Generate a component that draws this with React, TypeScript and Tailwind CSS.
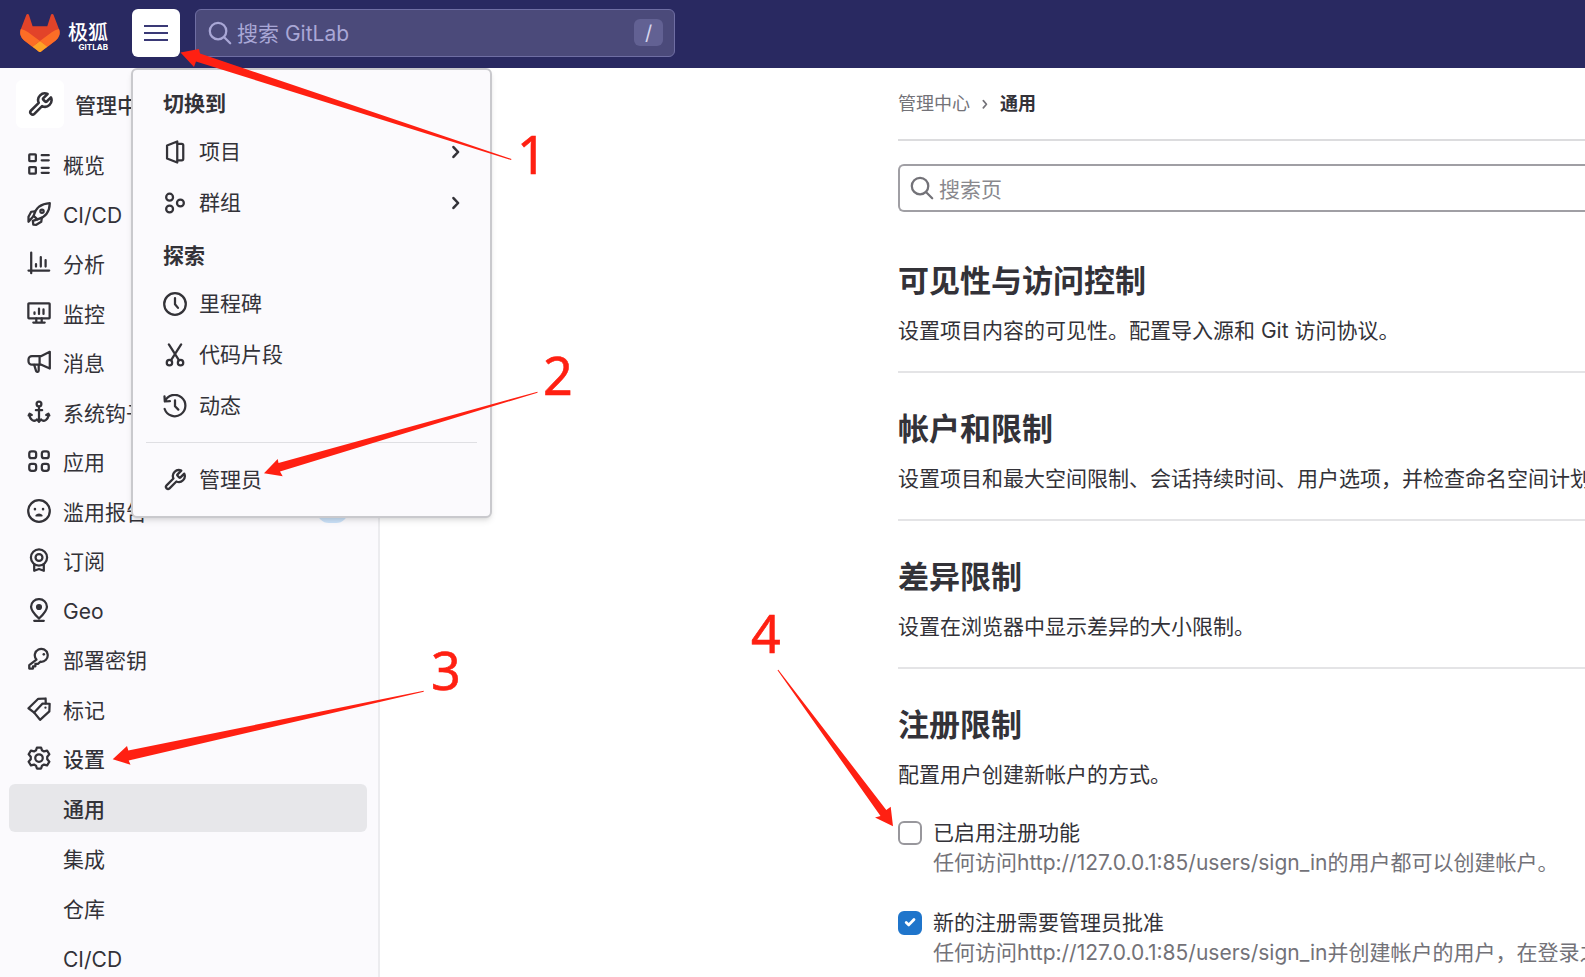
import React from "react";

type IconProps = { children: React.ReactNode; className?: string };

function Icon({ children, className = "size-6" }: IconProps) {
  return (
    <svg
      viewBox="0 0 16 16"
      className={`shrink-0 ${className}`}
      fill="none"
      stroke="currentColor"
      strokeWidth="1.5"
      strokeLinecap="round"
      strokeLinejoin="round"
      aria-hidden="true"
    >
      {children}
    </svg>
  );
}

const icons = {
  wrench: (
    <g transform="translate(0 0.1) scale(0.66)" strokeWidth="2.3">
      <path d="M14.7 6.3a1 1 0 0 0 0 1.4l1.6 1.6a1 1 0 0 0 1.4 0l3.77-3.77a6 6 0 0 1-7.94 7.94l-6.91 6.91a2.12 2.12 0 0 1-3-3l6.91-6.91a6 6 0 0 1 7.94-7.94l-3.76 3.76z" />
    </g>
  ),
  overview: (
    <g strokeLinejoin="miter">
      <rect x="1.5" y="1.6" width="4.4" height="4.4" rx="0.4" />
      <rect x="1.5" y="10" width="4.4" height="4.4" rx="0.4" />
      <path d="M9.8 2.1h4.7M9.8 5.5h4.7M9.8 10.5h4.7M9.8 13.9h4.7" />
    </g>
  ),
  rocket: (
    <>
      <path d="M4.4 9.2C5.6 4.4 9 1.2 15.2.8c-.2 6-3.4 9.6-8.2 10.8z" />
      <circle cx="10" cy="6.2" r="1.1" />
      <path d="M5.3 6.2 2.8 6.5 1 9.8v3.4l3.4-3.9M9.9 10.600l-.4 2.6-3.300 2-2-.1-.3-2.500 3-1" />
    </>
  ),
  chart: <path d="M2.8 1v13.8M1 13h13.8M6 10.4v-1.6M9.2 10.4V4M12.4 10.4V6" />,
  monitor: (
    <>
      <rect x="0.9" y="1.5" width="14.2" height="10" rx="0.4" />
      <path d="M5 8.6V7.6M8 8.6V5M11 8.6V5.6M6.2 11.6v2.4M9.8 11.6v2.4M4.2 14.4h7.6" />
    </>
  ),
  bullhorn: (
    <>
      <path d="M15.2 1.2v11.2L9.6 9.8H3.3A2.3 2.3 0 0 1 1 7.5V6.3A2.3 2.3 0 0 1 3.3 4h6.3z" />
      <path d="M8.4 4v5.8M4.8 9.9l1.3 4.2c.3.8 1.7.6 1.7-.5V10" />
    </>
  ),
  anchor: (
    <>
      <circle cx="8" cy="2.7" r="1.6" />
      <path d="M8 4.4v10.2M5.9 6.8h4.2M8 14.6l-1.4-1.7c-.8 1-2.1 1.1-3.1.5-1.3-.8-1.900-2.200-1.900-4M8 14.6l1.4-1.7c.8 1 2.1 1.1 3.1.5 1.3-.8 1.900-2.200 1.900-4M1.100 10.300l.6-1.200 1.500.9M14.900 10.300l-.6-1.200-1.500.9" />
    </>
  ),
  apps: (
    <>
      <rect x="1.5" y="1.5" width="4.6" height="4.6" rx="1.5" />
      <rect x="9.9" y="1.5" width="4.6" height="4.6" rx="1.5" />
      <rect x="1.5" y="9.9" width="4.6" height="4.6" rx="1.5" />
      <rect x="9.9" y="9.9" width="4.6" height="4.6" rx="1.5" />
    </>
  ),
  frown: (
    <>
      <circle cx="8" cy="8" r="7.2" />
      <path d="M5.3 6.7v.1M10.7 6.7v.1" strokeWidth="1.7" />
      <path d="M6.2 11.100c.8-1.100 2.800-1.100 3.600 0z" strokeWidth="1.2" />
    </>
  ),
  license: (
    <>
      <circle cx="8" cy="6.3" r="5.4" />
      <circle cx="8" cy="6.3" r="2.3" />
      <path d="M4.8 11v4.2L8 14l3.2 1.2V11" />
    </>
  ),
  location: (
    <>
      <path d="M8 13.7c3.5-3.3 5.3-5.8 5.3-7.900A5.100 5.100 0 0 0 8 .8a5.100 5.100 0 0 0-5.300 5c0 2.100 1.800 4.600 5.300 7.900zM4.800 15.200h6.400" />
      <circle cx="8" cy="6" r="1.3" fill="currentColor" />
    </>
  ),
  key: (
    <>
      <path d="M6.3 8.4A4.3 4.3 0 1 1 9 9.8L7.3 11.2H5.6v1.7H4v1.5H1.5v-2.3z" />
      <path d="M11.2 4.8v.1" strokeWidth="1.7" />
    </>
  ),
  labels: (
    <>
      <path d="m4.8 10.4 5.6-6 4.700.1-.2 5.100-6.200 5.600z" />
      <path d="M4.800 10.400 1 7.500l6.500-6.300 4.900-.2.100 3.200M12.300 7v.1" />
    </>
  ),
  settings: (
    <>
      <path d="M6.6 1h2.8l.6 1.900 1.300.7 2.100-.5L14.900 5.500l-1.400 1.600v1.800l1.400 1.600-1.500 2.400-2.100-.5-1.300.7-.6 1.900H6.600L6 13.100l-1.300-.7-2.100.5-1.500-2.400 1.400-1.600V7.100L1.100 5.500l1.500-2.400 2.100.5L6 2.900z" />
      <circle cx="8" cy="8" r="2.5" />
    </>
  ),
  project: (
    <path d="M2.7 3.7 9.5 1v14l-6.800-2.700zM9.700 2.500h2.800c.6 0 1 .4 1 1v9c0 .6-.4 1-1 1H9.700" />
  ),
  group: (
    <>
      <circle cx="4.4" cy="4.1" r="2.3" />
      <circle cx="11.6" cy="8" r="2.3" />
      <circle cx="4.4" cy="12" r="2.3" />
    </>
  ),
  clock: (
    <>
      <circle cx="8" cy="8" r="7.2" />
      <path d="M8 4v4.2l2 2.4" />
    </>
  ),
  scissors: (
    <>
      <circle cx="4.3" cy="13.1" r="1.8" />
      <circle cx="11.7" cy="13.1" r="1.8" />
      <path d="M3.9.9 10.600 11.400M12.100.9 5.400 11.400" />
    </>
  ),
  history: (
    <path d="M1.3 4.9A7.1 7.1 0 1 1 1.100 10M1 1.600l.2 3.400 3.400-.2M8 4.200v4l2.200 2.200" />
  ),
  search: (
    <>
      <circle cx="6.7" cy="6.7" r="5.5" />
      <path d="m10.800 10.800 4 4" />
    </>
  ),
  chevron: <path d="m6.300 4.700 3.100 3.300-3.100 3.300" strokeWidth="1.7" />,
};

type IconName = keyof typeof icons;

const navItems: { icon: IconName; label: string; badge?: boolean; bold?: boolean }[] = [
  { icon: "overview", label: "概览" },
  { icon: "rocket", label: "CI/CD" },
  { icon: "chart", label: "分析" },
  { icon: "monitor", label: "监控" },
  { icon: "bullhorn", label: "消息" },
  { icon: "anchor", label: "系统钩子" },
  { icon: "apps", label: "应用" },
  { icon: "frown", label: "滥用报告", badge: true },
  { icon: "license", label: "订阅" },
  { icon: "location", label: "Geo" },
  { icon: "key", label: "部署密钥" },
  { icon: "labels", label: "标记" },
  { icon: "settings", label: "设置", bold: true },
];

const subItems = [
  { label: "通用", active: true },
  { label: "集成", active: false },
  { label: "仓库", active: false },
  { label: "CI/CD", active: false },
];

function Logo() {
  return (
    <a href="#" className="flex items-center gap-2 text-white" aria-label="极狐 GitLab">
      <svg viewBox="0 0 25 24" className="h-[38px] w-10" aria-hidden="true">
        <path
          fill="#E24329"
          d="m24.507 9.5-.034-.09L21.082.562a.896.896 0 0 0-1.694.091l-2.290 7.010H7.825L5.535.653a.898.898 0 0 0-1.694-.090L.451 9.411.416 9.500a6.297 6.297 0 0 0 2.090 7.278l.012.010.030.022 5.160 3.867 2.560 1.935 1.554 1.176a1.051 1.051 0 0 0 1.268 0l1.555-1.176 2.560-1.935 5.197-3.890.014-.010A6.297 6.297 0 0 0 24.507 9.500z"
        />
        <path
          fill="#FC6D26"
          d="m24.507 9.5-.034-.09a11.440 11.440 0 0 0-4.560 2.051l-7.447 5.632 4.742 3.584 5.197-3.890.014-.010A6.297 6.297 0 0 0 24.507 9.500z"
        />
        <path
          fill="#FCA326"
          d="m7.707 20.677 2.560 1.935 1.555 1.176a1.051 1.051 0 0 0 1.268 0l1.555-1.176 2.560-1.935-4.743-3.584-4.755 3.584z"
        />
        <path
          fill="#FC6D26"
          d="M5.010 11.461a11.430 11.430 0 0 0-4.560-2.050L.416 9.500a6.297 6.297 0 0 0 2.090 7.278l.012.010.030.022 5.160 3.867 4.745-3.584-7.444-5.632z"
        />
      </svg>
      <span className="flex flex-col items-end pt-[10px]">
        <span className="text-[20px] leading-[20px] font-medium">极狐</span>
        <span className="text-[8px] leading-[9px] font-bold">GITLAB</span>
      </span>
    </a>
  );
}

function MenuItem({ icon, label, arrow }: { icon: IconName; label: string; arrow?: boolean }) {
  return (
    <li>
      <a href="#" className="flex h-[51px] items-center gap-3 px-[30px]">
        <Icon>{icons[icon]}</Icon>
        <span className="flex-1">{label}</span>
        {arrow && <Icon className="-mr-2 size-6">{icons.chevron}</Icon>}
      </a>
    </li>
  );
}

function SwitchMenu() {
  return (
    <nav
      aria-label="切换到"
      className="absolute top-[68px] left-[131px] z-10 w-[361px] rounded-md border-2 border-[#c9c9cd] bg-[#fbfafd] py-[11px] shadow-md"
    >
      <h2 className="flex h-[45px] items-center px-[30px] font-bold">切换到</h2>
      <ul>
        <MenuItem icon="project" label="项目" arrow />
        <MenuItem icon="group" label="群组" arrow />
      </ul>
      <h2 className="flex h-[50px] items-center px-[30px] pt-[6px] font-bold">探索</h2>
      <ul>
        <MenuItem icon="clock" label="里程碑" />
        <MenuItem icon="scissors" label="代码片段" />
        <MenuItem icon="history" label="动态" />
      </ul>
      <hr className="mx-[13px] my-[11px] border-[#dfdfe3]" />
      <ul>
        <MenuItem icon="wrench" label="管理员" />
      </ul>
    </nav>
  );
}

function Sidebar() {
  return (
    <aside className="w-[380px] shrink-0 border-r-2 border-[#ececef] bg-[#fbfafd] pt-3 pr-[11px] pl-[9px]">
      <a href="#" className="mb-3 ml-[7px] flex items-center gap-[11px]">
        <span className="grid size-12 place-items-center rounded-md bg-white">
          <Icon className="size-[27px]">{icons.wrench}</Icon>
        </span>
        <span className="pt-[3px] font-medium">管理中心</span>
      </a>
      <ul className="[&>li:nth-child(even)]:mb-px [&>li:nth-child(odd)]:mb-[2px]">
        {navItems.map((item) => (
          <li key={item.label}>
            <a href="#" className="flex h-12 items-center gap-3 rounded-md pr-[19px] pl-[18px]">
              <Icon>{icons[item.icon]}</Icon>
              <span className={item.bold ? "flex-1 pt-[3px] font-medium" : "flex-1 pt-[3px]"}>{item.label}</span>
              {item.badge && <span className="h-6 w-[31px] rounded-full bg-[#cbe2f9]" />}
            </a>
          </li>
        ))}
      </ul>
      <ul className="flex flex-col gap-[2px]">
        {subItems.map((item) => (
          <li key={item.label}>
            <a
              href="#"
              className={
                item.active
                  ? "flex h-12 items-center rounded-md bg-[#e7e7ea] pt-[3px] pl-[54px] font-medium"
                  : "flex h-12 items-center rounded-md pt-[3px] pl-[54px]"
              }
            >
              {item.label}
            </a>
          </li>
        ))}
      </ul>
    </aside>
  );
}

function SectionHead({ title, text }: { title: string; text: string }) {
  return (
    <>
      <h2 className="mb-[14px] text-[31px] leading-[40px] font-bold">{title}</h2>
      <p className="leading-[32px]">{text}</p>
    </>
  );
}

function Option({ id, label, help, checked }: { id: string; label: string; help: string; checked?: boolean }) {
  return (
    <div className="flex gap-[11px]">
      <span className="mt-[3px] grid size-6 shrink-0">
        <input
          id={id}
          type="checkbox"
          defaultChecked={checked}
          className="peer col-start-1 row-start-1 size-6 appearance-none rounded-md border-2 border-[#98979c] bg-white checked:border-[#1f75cb] checked:bg-[#1f75cb]"
        />
        <svg
          viewBox="0 0 24 24"
          className="pointer-events-none invisible col-start-1 row-start-1 size-6 peer-checked:visible"
          fill="none"
          stroke="white"
          strokeWidth="2.8"
          strokeLinecap="round"
          strokeLinejoin="round"
          aria-hidden="true"
        >
          <path d="m8.200 11.400 2.600 2.500 5.200-5.400" />
        </svg>
      </span>
      <div className="leading-[30px]">
        <label htmlFor={id}>{label}</label>
        <p className="text-[#737278]">{help}</p>
      </div>
    </div>
  );
}

function Annotations() {
  return (
    <svg className="pointer-events-none absolute top-0 left-0 z-20 h-[977px] w-[1585px]" fill="#ff2012">
      <path d="M180.500 52.500 199 49l1 4.500L511.500 159 511 160 196 61.500l-2 5.500z" />
      <path d="M264 473.300 277.700 459l.8 4L537.500 391.700v1L280 471.500l2.700 4.700z" />
      <path d="M112.700 759.300 127 746l1.300 4.500L423.700 690.700v1L128.700 760.500l1.800 4.200z" />
      <path d="M893 826.300 890.700 806.700l-4.400 3.300L778.300 669.700l-.8.600L880.500 816l-5.500 1.500z" />
      <g className="font-['Noto_Sans'] text-[52px]" stroke="#ff2012" strokeWidth="0.6">
        <text x="517" y="174">1</text>
        <text x="543" y="395">2</text>
        <text x="431" y="690">3</text>
        <text x="751" y="653">4</text>
      </g>
    </svg>
  );
}

export default function App() {
  return (
    <div className="relative flex h-screen flex-col overflow-hidden bg-white font-[Inter,'Noto_Sans_CJK_SC',sans-serif] text-[21px] leading-[32px] text-[#333238]">
      <header className="flex h-[68px] shrink-0 items-center bg-[#292961] pb-[3px] pl-5">
        <Logo />
        <button
          type="button"
          aria-label="菜单"
          className="ml-6 grid size-12 place-items-center rounded-md bg-white text-[#3a3976]"
        >
          <svg viewBox="0 0 24 24" className="size-6" stroke="currentColor" strokeWidth="2" aria-hidden="true">
            <path d="M0 5h24M0 12h24M0 19h24" />
          </svg>
        </button>
        <div className="ml-[15px] flex h-12 w-[480px] items-center rounded-md border border-[#6f6ea3] bg-[#4b4a7a] pr-[11px] pl-3 text-[#a9a7d6]">
          <Icon>{icons.search}</Icon>
          <input
            type="text"
            aria-label="搜索 GitLab"
            placeholder="搜索 GitLab"
            className="ml-[5px] min-w-0 flex-1 bg-transparent pt-[3px] outline-none placeholder:text-[#a9a7d6]"
          />
          <kbd className="grid h-[27px] w-[29px] place-items-center rounded-md bg-[#626193] font-[Inter] text-[20px] leading-[20px] text-[#d6d5ee]">
            /
          </kbd>
        </div>
      </header>

      <div className="flex min-h-0 flex-1">
        <Sidebar />
        <main className="min-w-0 flex-1 overflow-hidden pl-[518px] whitespace-nowrap">
          <nav
            aria-label="面包屑"
            className="flex h-[73px] items-center border-b-2 border-[#dcdcde] pt-px text-[18px] leading-[28px]"
          >
            <a href="#" className="text-[#737278]">
              管理中心
            </a>
            <Icon className="mx-[6px] size-[18px] text-[#737278]">
              <path d="m6.500 5 2.800 3.200-2.800 3.200" />
            </Icon>
            <a href="#" className="font-bold">
              通用
            </a>
          </nav>

          <div className="mt-[23px] mb-[13px] flex h-12 items-center rounded-l-md border-2 border-r-0 border-[#a09fa4] pl-[10px] text-[#737278]">
            <Icon>{icons.search}</Icon>
            <input
              type="text"
              aria-label="搜索页"
              placeholder="搜索页"
              className="ml-[5px] min-w-0 flex-1 bg-transparent pt-[3px] outline-none placeholder:text-[#89888d]"
            />
          </div>

          <section className="border-b-2 border-[#e4e4e6] pt-9 pb-6">
            <SectionHead title="可见性与访问控制" text="设置项目内容的可见性。配置导入源和 Git 访问协议。" />
          </section>
          <section className="border-b-2 border-[#e4e4e6] pt-9 pb-6">
            <SectionHead
              title="帐户和限制"
              text="设置项目和最大空间限制、会话持续时间、用户选项，并检查命名空间计划"
            />
          </section>
          <section className="border-b-2 border-[#e4e4e6] pt-9 pb-6">
            <SectionHead title="差异限制" text="设置在浏览器中显示差异的大小限制。" />
          </section>
          <section className="pt-9">
            <SectionHead title="注册限制" text="配置用户创建新帐户的方式。" />
            <div className="mt-[27px] flex flex-col gap-[30px]">
              <Option
                id="signup-enabled"
                label="已启用注册功能"
                help="任何访问http://127.0.0.1:85/users/sign_in的用户都可以创建帐户。"
              />
              <Option
                id="require-approval"
                label="新的注册需要管理员批准"
                help="任何访问http://127.0.0.1:85/users/sign_in并创建帐户的用户，在登录之"
                checked
              />
            </div>
          </section>
        </main>
      </div>

      <SwitchMenu />
      <Annotations />
    </div>
  );
}
